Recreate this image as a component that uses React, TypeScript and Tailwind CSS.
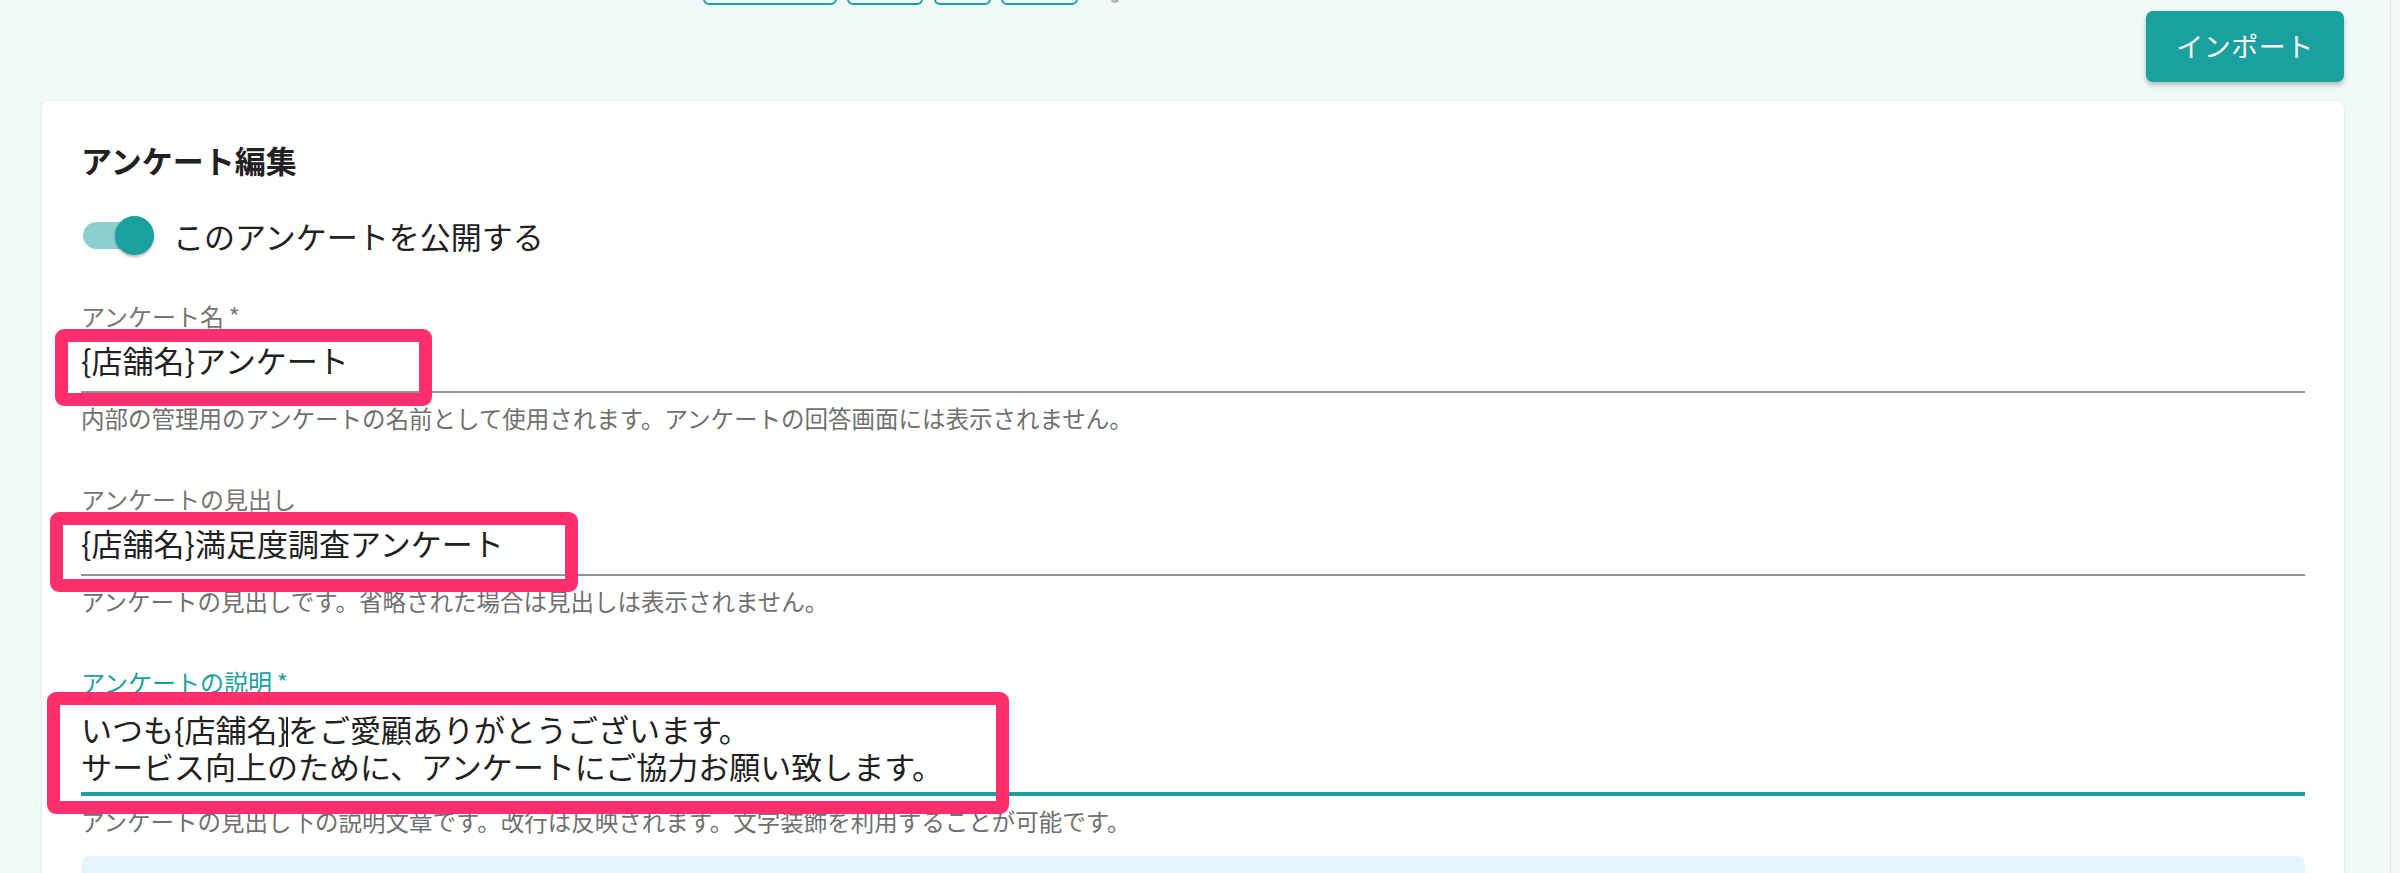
import React from "react";

const font = "font-['Noto_Sans_CJK_JP','Noto_Sans',sans-serif]";

function Annot({ className }: { className: string }) {
  return (
    <div
      className={`pointer-events-none absolute rounded-[9px] border-[13px] border-[#ff2e6c] ${className}`}
    />
  );
}

export default function App() {
  return (
    <div className={`flex h-[873px] w-full overflow-hidden bg-[#f0f9f8] ${font}`}>
      <div className="flex-1 pl-[42px] pr-[46px]">
        {/* clipped toolbar buttons */}
        <div className="-mt-[45px] flex h-[50px] items-end pl-[661px]">
          <div className="h-[50px] w-[134px] rounded-[6px] border-2 border-[#1ba0a0]" />
          <div className="ml-[10px] h-[50px] w-[76px] rounded-[6px] border-2 border-[#1ba0a0]" />
          <div className="ml-[11px] h-[50px] w-[57px] rounded-[6px] border-2 border-[#1ba0a0]" />
          <div className="ml-[10px] h-[50px] w-[77px] rounded-[6px] border-2 border-[#1ba0a0]" />
          <div className="mb-[2px] ml-[33px] h-[8px] w-[8px] rounded-full bg-[#b5b5b5]" />
        </div>

        {/* import */}
        <div className="mt-[6px] flex justify-end">
          <button className="flex h-[71px] w-[198px] items-center justify-center rounded-[7px] bg-[#1ba0a0] text-[27px] font-normal tracking-[0.5px] text-white shadow-[0_3px_5px_rgba(0,0,0,0.25)]">
            インポート
          </button>
        </div>

        {/* card */}
        <div className="mt-[19px] h-[900px] rounded-[8px] bg-white px-[39px] pt-[34px] shadow-[0_1px_3px_rgba(0,0,0,0.12)]">
          <h1 className="text-[31px] font-bold leading-[50px] text-[#212121]">アンケート編集</h1>

          <div className="mt-[14px] flex h-[74px] items-center">
            <div className="relative h-[74px] w-[92px] shrink-0">
              <div className="absolute left-[2px] top-[23px] h-[27px] w-[66px] rounded-full bg-[#8dcfcf]" />
              <div className="absolute left-[34px] top-[17px] h-[39px] w-[39px] rounded-full bg-[#1ba0a0] shadow-[0_2px_3px_rgba(0,0,0,0.3)]" />
            </div>
            <span className="text-[31px] leading-[46px] text-[#212121]">
              このアンケートを公開する
            </span>
          </div>

          {/* field 1 */}
          <div className="relative mt-[27px]">
            <div className="h-[31px] text-[24px] leading-[31px] text-[#757575]">アンケート名{"\u2009*"}</div>
            <div className="border-b-2 border-[#949494] pb-[9px] pt-[7px] text-[31px] leading-[44px] text-[#212121]">
              {"{店舗名}アンケート"}
            </div>
            <div className="mt-[6px] text-[23.5px] leading-[38px] text-[#707070]">
              内部の管理用のアンケートの名前として使用されます。アンケートの回答画面には表示されません。
            </div>
            <Annot className="-left-[26px] top-[29px] h-[77px] w-[377px]" />
          </div>

          {/* field 2 */}
          <div className="relative mt-[46px]">
            <div className="h-[31px] text-[24px] leading-[31px] text-[#757575]">アンケートの見出し</div>
            <div className="border-b-2 border-[#949494] pb-[9px] pt-[7px] text-[31px] leading-[44px] text-[#212121]">
              {"{店舗名}満足度調査アンケート"}
            </div>
            <div className="mt-[6px] text-[23.5px] leading-[38px] text-[#707070]">
              アンケートの見出しです。省略された場合は見出しは表示されません。
            </div>
            <Annot className="-left-[31px] top-[29px] h-[80px] w-[528px]" />
          </div>

          {/* field 3 */}
          <div className="relative mt-[46px]">
            <div className="h-[31px] text-[24px] leading-[31px] text-[#1ba0a0]">アンケートの説明{"\u2009*"}</div>
            <div className="border-b-4 border-[#1ba0a0] pb-[8px] pt-[13px] text-[31px] leading-[37px] text-[#212121]">
              <div>
                {"いつも{店舗名}"}
                <span className="-ml-[2px] inline-block h-[30px] w-[2px] bg-[#212121] align-[-5px]" />
                をご愛顧ありがとうございます。
              </div>
              <div>サービス向上のために、アンケートにご協力お願い致します。</div>
            </div>
            <div className="mt-[6px] text-[23.5px] leading-[38px] text-[#707070]">
              アンケートの見出し下の説明文章です。改行は反映されます。文字装飾を利用することが可能です。
            </div>
            <Annot className="-left-[34px] top-[26px] h-[122px] w-[962px]" />
          </div>

          <div className="mt-[16px] h-[120px] rounded-[8px] bg-[#e6f4fd]" />
        </div>
      </div>
      <div className="w-[10px] shrink-0 border-l border-[#e4e4e4] bg-[#f7f7f7]" />
    </div>
  );
}
